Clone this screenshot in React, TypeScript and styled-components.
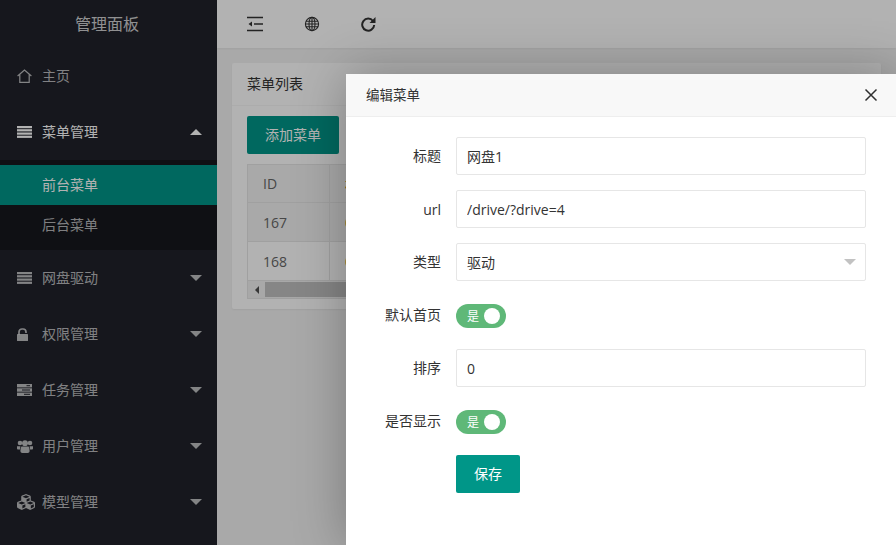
import React from "react";
import styled, { createGlobalStyle } from "styled-components";
import { FaCubes } from "react-icons/fa";

const Global = createGlobalStyle`
  html, body { margin: 0; padding: 0; height: 100%; overflow: hidden; }
  body { font-family: "Open Sans", "Noto Sans CJK SC", sans-serif; font-size: 14px; color: #333; }
  * { box-sizing: border-box; }
`;

const Page = styled.div`
  position: relative;
  display: flex;
  width: 896px;
  height: 545px;
  overflow: hidden;
  background: #f2f2f2;
`;
const Sidebar = styled.aside`
  flex: 0 0 217px;
  background: #20222a;
  display: flex;
  flex-direction: column;
`;
const Brand = styled.div`
  height: 48px;
  padding: 0 3px 2px 0;
  display: flex;
  align-items: center;
  justify-content: center;
  font-size: 16px;
  color: rgba(255, 255, 255, 0.8);
`;
const NavItem = styled.div<{ $open?: boolean }>`
  height: 56px;
  flex: none;
  display: flex;
  align-items: center;
  padding: 0 15px 0 17px;
  color: ${(p) => (p.$open ? "#fff" : "rgba(255,255,255,.7)")};
`;
const NavIcon = styled.span`
  width: 25px;
  display: flex;
  align-items: center;
  font-size: 15px;
  color: inherit;
`;
const NavLabel = styled.span`
  flex: 1;
  padding-bottom: 2px;
`;
const Caret = styled.span<{ $up?: boolean }>`
  width: 0;
  height: 0;
  border-left: 6px solid transparent;
  border-right: 6px solid transparent;
  ${(p) => (p.$up ? "border-bottom: 6px solid #fff;" : "border-top: 6px solid rgba(255,255,255,.7);")}
`;
const SubNav = styled.div`
  background: rgba(0, 0, 0, 0.3);
  padding: 5px 0;
`;
const SubItem = styled.div<{ $active?: boolean }>`
  height: 40px;
  display: flex;
  align-items: center;
  padding: 0 0 2px 42px;
  background: ${(p) => (p.$active ? "#009688" : "transparent")};
  color: ${(p) => (p.$active ? "#fff" : "rgba(255,255,255,.7)")};
`;
const Main = styled.main`
  flex: 1;
  min-width: 0;
  display: flex;
  flex-direction: column;
`;
const Topbar = styled.header`
  height: 48px;
  flex: none;
  background: #fff;
  display: flex;
  align-items: center;
  padding-left: 30px;
  box-shadow: 0 1px 2px rgba(0, 0, 0, 0.05);
  color: #333;
`;
const TopIcon = styled.svg<{ $gap?: number }>`
  width: 16px;
  height: 16px;
  display: block;
  margin-right: ${(p) => p.$gap ?? 0}px;
`;
const Content = styled.div`
  padding: 15px;
`;
const Card = styled.section`
  background: #fff;
  border-radius: 2px;
  box-shadow: 0 1px 2px rgba(0, 0, 0, 0.05);
`;
const CardHead = styled.div`
  height: 43px;
  padding-bottom: 2px;
  display: flex;
  align-items: center;
  padding-left: 15px;
  border-bottom: 1px solid #f6f6f6;
`;
const CardBody = styled.div`
  padding: 10px 15px;
`;
const PrimaryButton = styled.button`
  display: block;
  height: 38px;
  border: 0;
  border-radius: 2px;
  background: #009688;
  color: #fff;
  font: inherit;
  padding: 0 18px 2px;
`;
const AddButton = styled(PrimaryButton)`
  margin-bottom: 10px;
`;
const SaveButton = styled(PrimaryButton)`
  width: 64px;
`;
const TableBox = styled.div`
  border: 1px solid #e6e6e6;
`;
const Row = styled.div<{ $head?: boolean; $hover?: boolean }>`
  display: grid;
  grid-template-columns: 81px 1fr;
  height: ${(p) => (p.$head ? 38 : 39)}px;
  border-bottom: 1px solid #e6e6e6;
  background: ${(p) => (p.$head || p.$hover ? "#f2f2f2" : "#fff")};
`;
const Cell = styled.div`
  display: flex;
  align-items: center;
  padding-left: 15px;
  color: #666;
  & + & {
    border-left: 1px solid #e6e6e6;
    color: #b86b00;
  }
`;
const ScrollTrack = styled.div`
  height: 17px;
  background: #f1f1f1;
  display: flex;
  align-items: center;
`;
const ScrollArrow = styled.span`
  width: 17px;
  display: flex;
  justify-content: center;
  &::before {
    content: "";
    border-top: 4px solid transparent;
    border-bottom: 4px solid transparent;
    border-right: 4px solid #505050;
  }
`;
const ScrollThumb = styled.div`
  flex: 1;
  height: 15px;
  background: #c1c1c1;
`;
const Shade = styled.div`
  position: absolute;
  inset: 0;
  background: rgba(0, 0, 0, 0.3);
`;
const Modal = styled.div`
  position: absolute;
  left: 346px;
  top: 74px;
  width: 550px;
  height: 471px;
  background: #fff;
  box-shadow: 1px 1px 50px rgba(0, 0, 0, 0.3);
`;
const ModalHead = styled.div`
  height: 43px;
  display: flex;
  align-items: center;
  justify-content: space-between;
  padding: 0 18px 0 20px;
  background: #f8f8f8;
  border-bottom: 1px solid #eee;
  font-size: 14px;
  color: #333;
`;
const ModalTitle = styled.span`
  padding-bottom: 2px;
  font-size: 13.5px;
`;
const Form = styled.form`
  padding: 20px 30px 0 0;
  display: flex;
  flex-direction: column;
  gap: 15px;
`;
const Field = styled.div`
  display: grid;
  grid-template-columns: 95px 1fr;
  column-gap: 15px;
  height: 38px;
  align-items: center;
`;
const Label = styled.label<{ $latin?: boolean }>`
  text-align: right;
  color: #333;
  padding-bottom: ${(p) => (p.$latin ? 0 : 2)}px;
`;
const Input = styled.input`
  width: 100%;
  height: 38px;
  border: 1px solid #e6e6e6;
  border-radius: 2px;
  padding: 0 10px;
  font: inherit;
  color: #333;
  outline: none;
`;
const SelectBox = styled.div`
  height: 38px;
  border: 1px solid #e6e6e6;
  border-radius: 2px;
  padding: 0 10px;
  display: flex;
  align-items: center;
  justify-content: space-between;
`;
const SelectCaret = styled.span`
  border-left: 6px solid transparent;
  border-right: 6px solid transparent;
  border-top: 6px solid #c2c2c2;
  margin-right: -1px;
`;
const Switch = styled.div`
  width: 50px;
  height: 24px;
  margin-top: 2px;
  border-radius: 20px;
  background: #5fb878;
  display: flex;
  align-items: center;
  justify-content: space-between;
  padding: 0 6px 0 11px;
  color: #fff;
  font-size: 12px;
`;
const Knob = styled.span`
  width: 16px;
  height: 16px;
  border-radius: 50%;
  background: #fff;
`;

const ListIcon = () => (
  <svg width="15" height="12" viewBox="0 0 15 12" fill="currentColor">
    <rect y="0" width="15" height="2.2" />
    <rect y="3.2" width="15" height="2.2" />
    <rect y="6.5" width="15" height="2.2" />
    <rect y="9.7" width="15" height="2.2" />
  </svg>
);
const HomeIcon = () => (
  <svg width="15" height="14" viewBox="0 0 15 14" fill="none" stroke="currentColor" strokeWidth="1.2">
    <path d="M.6 7 7.5 1l6.9 6M2.8 5.6v7.8h9.4V5.6" />
  </svg>
);
const UnlockIcon = () => (
  <svg width="11" height="13" viewBox="0 0 11 13" fill="currentColor">
    <rect x="0" y="6" width="11" height="7" rx="0.6" />
    <path d="M2 6.5V4a3 3 0 0 1 3-3h1a3 3 0 0 1 3 3v1" fill="none" stroke="currentColor" strokeWidth="1.7" />
  </svg>
);
const ServerIcon = () => (
  <svg width="15" height="12" viewBox="0 0 15 12">
    <g fill="currentColor">
      <rect y="0" width="15" height="3.4" />
      <rect y="4.3" width="15" height="3.4" />
      <rect y="8.6" width="15" height="3.4" />
    </g>
    <g fill="#20222a">
      <rect x="9.5" y="1.2" width="3.5" height="1" />
      <rect x="5" y="5.5" width="8" height="1" />
      <rect x="7" y="9.8" width="6" height="1" />
    </g>
  </svg>
);
const UsersIcon = () => (
  <svg width="16" height="13" viewBox="0 0 16 13" fill="currentColor">
    <circle cx="3" cy="3" r="2.3" />
    <circle cx="13" cy="3" r="2.3" />
    <circle cx="8" cy="3.2" r="2.9" />
    <path d="M0 6.2h3.4L3 9.4H.6C.2 9.4 0 9 0 8.6zM16 6.2h-3.4l.4 3.2h2.4c.4 0 .6-.4.6-.8z" />
    <path d="M4.4 6.4h7.2c.7 1.200 1 3 1 4.600 0 1.200-.8 2-1.900 2H5.300c-1.100 0-1.900-.8-1.900-2 0-1.600.3-3.400 1-4.600z" />
  </svg>
);

const nav = [
  { label: "网盘驱动", icon: <ListIcon /> },
  { label: "权限管理", icon: <UnlockIcon /> },
  { label: "任务管理", icon: <ServerIcon /> },
  { label: "用户管理", icon: <UsersIcon /> },
  { label: "模型管理", icon: <FaCubes size={18} /> },
];

export default function App() {
  return (
    <Page>
      <Global />
      <Sidebar>
        <Brand>管理面板</Brand>
        <NavItem>
          <NavIcon><HomeIcon /></NavIcon>
          <NavLabel>主页</NavLabel>
        </NavItem>
        <NavItem $open>
          <NavIcon><ListIcon /></NavIcon>
          <NavLabel>菜单管理</NavLabel>
          <Caret $up />
        </NavItem>
        <SubNav>
          <SubItem $active>前台菜单</SubItem>
          <SubItem>后台菜单</SubItem>
        </SubNav>
        {nav.map((n) => (
          <NavItem key={n.label}>
            <NavIcon>{n.icon}</NavIcon>
            <NavLabel>{n.label}</NavLabel>
            <Caret />
          </NavItem>
        ))}
      </Sidebar>
      <Main>
        <Topbar>
          <TopIcon $gap={41} viewBox="0 0 16 16" fill="none" stroke="currentColor" strokeWidth="1.4">
            <path d="M0 1.5h16M7 8h9M0 14.5h16" />
            <path d="M5 5.5 1.5 8 5 10.5z" fill="currentColor" stroke="none" />
          </TopIcon>
          <TopIcon $gap={40} viewBox="0 0 16 16" fill="none" stroke="currentColor" strokeWidth="1.1">
            <circle cx="8" cy="8" r="6.6" />
            <ellipse cx="8" cy="8" rx="3" ry="6.6" />
            <path d="M8 1.4v13.2M2 5.200h12M2 10.800h12M1.400 8h13.200" />
          </TopIcon>
          <TopIcon viewBox="0 0 16 16" fill="none" stroke="currentColor" strokeWidth="2">
            <path d="M13 5A6 6 0 1 0 14.2 9" />
            <path d="M15.500 1v6h-6z" fill="currentColor" stroke="none" />
          </TopIcon>
        </Topbar>
        <Content>
          <Card>
            <CardHead>菜单列表</CardHead>
            <CardBody>
              <AddButton type="button">添加菜单</AddButton>
              <TableBox>
                <Row $head><Cell>ID</Cell><Cell>标题</Cell></Row>
                <Row $hover><Cell>167</Cell><Cell>0</Cell></Row>
                <Row><Cell>168</Cell><Cell>0</Cell></Row>
                <ScrollTrack>
                  <ScrollArrow />
                  <ScrollThumb />
                </ScrollTrack>
              </TableBox>
            </CardBody>
          </Card>
        </Content>
      </Main>
      <Shade />
      <Modal>
        <ModalHead>
          <ModalTitle>编辑菜单</ModalTitle>
          <svg width="14" height="14" viewBox="0 0 14 14" stroke="#2f2f2f" strokeWidth="1.5" fill="none">
            <path d="M1.5 1.5l11 11M12.5 1.5l-11 11" />
          </svg>
        </ModalHead>
        <Form>
          <Field><Label>标题</Label><Input defaultValue="网盘1" /></Field>
          <Field><Label $latin>url</Label><Input defaultValue="/drive/?drive=4" /></Field>
          <Field>
            <Label>类型</Label>
            <SelectBox>驱动<SelectCaret /></SelectBox>
          </Field>
          <Field><Label>默认首页</Label><Switch>是<Knob /></Switch></Field>
          <Field><Label>排序</Label><Input defaultValue="0" /></Field>
          <Field><Label>是否显示</Label><Switch>是<Knob /></Switch></Field>
          <Field><span /><SaveButton type="button">保存</SaveButton></Field>
        </Form>
      </Modal>
    </Page>
  );
}
